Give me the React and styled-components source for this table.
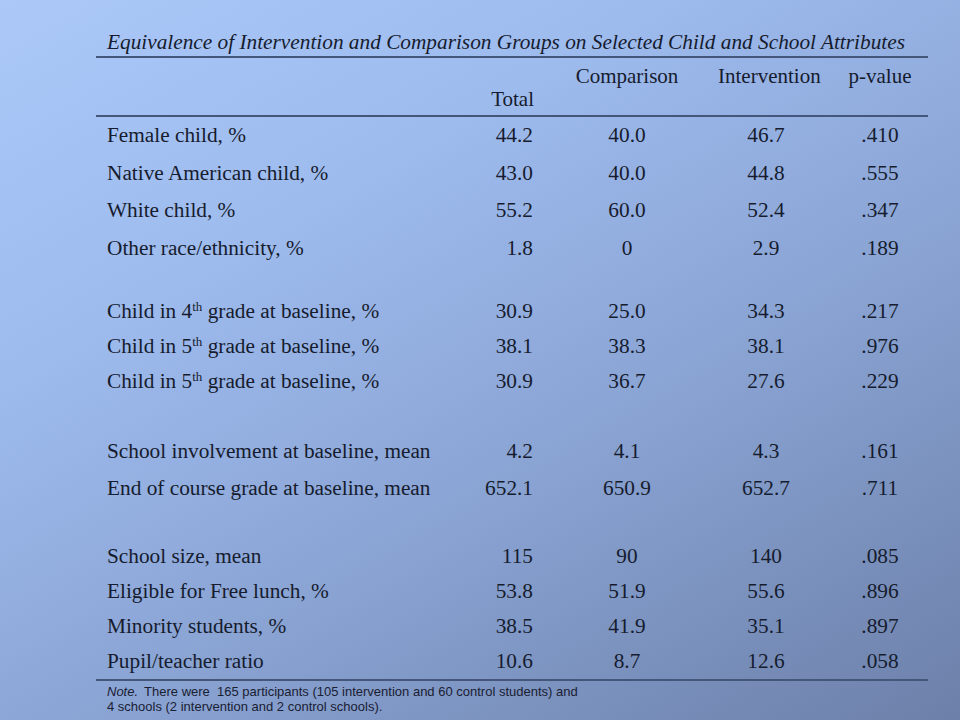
import React from "react";
import styled, { createGlobalStyle } from "styled-components";

const GlobalStyle = createGlobalStyle`
  html, body {
    margin: 0;
    padding: 0;
  }
  body {
    font-family: "Liberation Serif", "Times New Roman", serif;
    color: #161c2e;
  }
`;

const Slide = styled.div`
  width: 960px;
  height: 720px;
  overflow: hidden;
  background: linear-gradient(150deg, #abc8f9 0%, #9ebbee 30%, #8aa4d4 60%, #6c80a9 100%);
`;

const TableBox = styled.div`
  width: 832px;
  margin-left: 96px;
  padding-top: 31px;
`;

const Caption = styled.div`
  font-style: italic;
  font-size: 21.3px;
  line-height: 23px;
  padding-left: 11px;
  padding-bottom: 2px;
  border-bottom: 2px solid #44567a;
  white-space: nowrap;
`;

const cols = "340px 100px 182px 96px 114px";

const HeaderRow = styled.div`
  display: grid;
  grid-template-columns: ${cols};
  height: 59px;
  border-bottom: 2px solid #44567a;
  font-size: 21px;
  box-sizing: border-box;
  padding-top: 6px;
  padding-bottom: 3px;
`;

const HeadCell = styled.div`
  text-align: ${(p) => p.$align || "center"};
  align-self: ${(p) => (p.$bottom ? "end" : "start")};
  padding-left: ${(p) => p.$padLeft || 0}px;
  padding-right: ${(p) => p.$padRight || 0}px;
`;

const Group = styled.div`
  margin-top: ${(p) => p.$gap}px;
`;

const Row = styled.div`
  display: grid;
  grid-template-columns: ${cols};
  align-items: center;
  height: ${(p) => p.$h}px;
  font-size: 21.3px;
`;

const Label = styled.div`
  padding-left: 11px;
  white-space: nowrap;
`;

const Num = styled.div`
  text-align: ${(p) => p.$align || "center"};
  padding-left: ${(p) => p.$padLeft || 0}px;
  padding-right: ${(p) => p.$padRight || 0}px;
`;

const Sup = styled.sup`
  font-size: 13px;
  line-height: 0;
  vertical-align: 7px;
`;

const BottomRule = styled.div`
  border-bottom: 2px solid #44567a;
`;

const Note = styled.div`
  font-family: "Liberation Sans", Arial, sans-serif;
  font-size: 13px;
  line-height: 15px;
  padding-left: 11px;
  padding-top: 3px;
  color: #1a2032;
`;

const NoteLine = styled.div`
  white-space: pre;
`;

const NoteLead = styled.i`
  padding-right: 6px;
`;

const groups = [
  {
    gap: 0,
    h: 37.5,
    rows: [
      ["Female child, %", "44.2", "40.0", "46.7", ".410"],
      ["Native American child, %", "43.0", "40.0", "44.8", ".555"],
      ["White child, %", "55.2", "60.0", "52.4", ".347"],
      ["Other race/ethnicity, %", "1.8", "0", "2.9", ".189"],
    ],
  },
  {
    gap: 27,
    h: 35,
    rows: [
      [["Child in 4", "th", " grade at baseline, %"], "30.9", "25.0", "34.3", ".217"],
      [["Child in 5", "th", " grade at baseline, %"], "38.1", "38.3", "38.1", ".976"],
      [["Child in 5", "th", " grade at baseline, %"], "30.9", "36.7", "27.6", ".229"],
    ],
  },
  {
    gap: 34,
    h: 37,
    rows: [
      ["School involvement at baseline, mean", "4.2", "4.1", "4.3", ".161"],
      ["End of course grade at baseline, mean", "652.1", "650.9", "652.7", ".711"],
    ],
  },
  {
    gap: 32,
    h: 35,
    rows: [
      ["School size, mean", "115", "90", "140", ".085"],
      ["Eligible for Free lunch, %", "53.8", "51.9", "55.6", ".896"],
      ["Minority students, %", "38.5", "41.9", "35.1", ".897"],
      ["Pupil/teacher ratio", "10.6", "8.7", "12.6", ".058"],
    ],
  },
];

function RowLabel({ text }) {
  if (Array.isArray(text)) {
    return (
      <Label>
        {text[0]}
        <Sup>{text[1]}</Sup>
        {text[2]}
      </Label>
    );
  }
  return <Label>{text}</Label>;
}

export default function App() {
  return (
    <Slide>
      <GlobalStyle />
      <TableBox>
        <Caption>
          Equivalence of Intervention and Comparison Groups on Selected Child and School Attributes
        </Caption>
        <HeaderRow>
          <HeadCell />
          <HeadCell $align="right" $padRight={2} $bottom>
            Total
          </HeadCell>
          <HeadCell>Comparison</HeadCell>
          <HeadCell>Intervention</HeadCell>
          <HeadCell $padLeft={18}>p-value</HeadCell>
        </HeaderRow>
        {groups.map((g, gi) => (
          <Group key={gi} $gap={g.gap}>
            {g.rows.map((r, ri) => (
              <Row key={ri} $h={g.h}>
                <RowLabel text={r[0]} />
                <Num $align="right" $padRight={3}>
                  {r[1]}
                </Num>
                <Num>{r[2]}</Num>
                <Num>{r[3]}</Num>
                <Num $padLeft={18}>{r[4]}</Num>
              </Row>
            ))}
          </Group>
        ))}
        <BottomRule />
        <Note>
          <NoteLine>
            <NoteLead>Note.</NoteLead>
            {"There were  165 participants (105 intervention and 60 control students) and"}
          </NoteLine>
          <NoteLine>4 schools (2 intervention and 2 control schools).</NoteLine>
        </Note>
      </TableBox>
    </Slide>
  );
}
